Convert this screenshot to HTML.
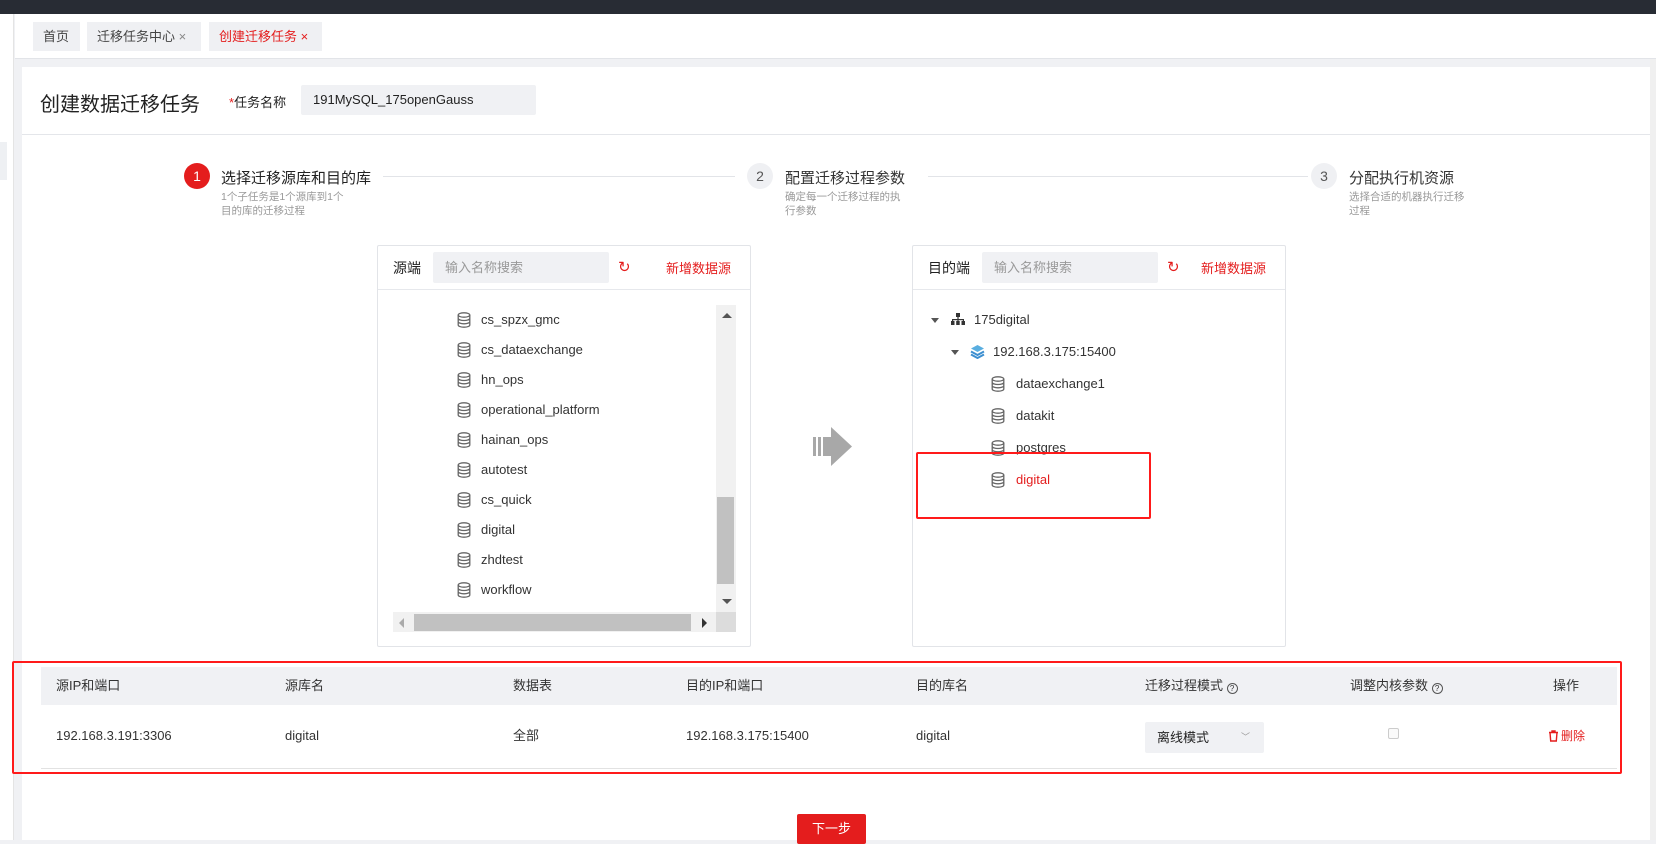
<!DOCTYPE html>
<html><head><meta charset="utf-8"><style>
*{margin:0;padding:0;box-sizing:border-box}
body{width:1656px;height:840px;overflow:hidden;background:#f0f1f4;font-family:"Liberation Sans","Noto Sans CJK SC",sans-serif;color:#222;position:relative;font-size:13px}
.a{position:absolute}
.red{color:#e41d1d}
.tab{position:absolute;top:22px;height:29px;background:#eff0f3;font-size:13px;line-height:29px;padding:0 10px;color:#444}
.db{position:absolute;width:14px;height:16px}
.item{position:absolute;font-size:13px;color:#333;white-space:nowrap}
.step{position:absolute;width:26px;height:26px;border-radius:50%;text-align:center;line-height:26px;font-size:14px}
.desc{position:absolute;font-size:10.5px;color:#999;line-height:14px}
.th{position:absolute;top:678px;font-size:13px;color:#333;line-height:16px}
.td{position:absolute;top:728px;font-size:13px;color:#333;line-height:16px}
</style></head><body>
<svg width="0" height="0" style="position:absolute"><defs>
<symbol id="db" viewBox="0 0 14 16"><g fill="none" stroke="#666" stroke-width="1.3"><ellipse cx="7" cy="3" rx="5.8" ry="2.2"/><path d="M1.2 3v10c0 1.2 2.6 2.2 5.8 2.2s5.8-1 5.8-2.2V3M1.2 6.3c0 1.2 2.6 2.2 5.8 2.2s5.8-1 5.8-2.2M1.2 9.6c0 1.2 2.6 2.2 5.8 2.2s5.8-1 5.8-2.2"/></g></symbol>
</defs></svg>
<div class="a" style="left:0;top:0;width:1656px;height:14px;background:#282c34"></div>
<div class="a" style="left:0;top:14px;width:14px;height:826px;background:#fff;border-right:1px solid #e4e4e4"></div>
<div class="a" style="left:0;top:142px;width:7px;height:38px;background:#eef0f3"></div>
<div class="a" style="left:15px;top:14px;width:1641px;height:45px;background:#fff;border-bottom:1px solid #e2e4e8"></div>
<div class="tab" style="left:33px;width:47px">首页</div>
<div class="tab" style="left:87px;width:114px">迁移任务中心 <span style="color:#888">×</span></div>
<div class="tab" style="left:209px;width:113px;color:#e41d1d">创建迁移任务 <span>×</span></div>
<div class="a" style="left:22px;top:67px;width:1628px;height:773px;background:#fff"></div>
<div class="a" style="left:1650px;top:59px;width:6px;height:781px;background:#f0f0f0"></div>
<div class="a" style="left:40px;top:88px;font-size:20px;color:#222">创建数据迁移任务</div>
<div class="a" style="left:229px;top:92px;font-size:13px"><span class="red">*</span>任务名称</div>
<div class="a" style="left:301px;top:85px;width:235px;height:30px;background:#f0f1f4;border-radius:2px;font-size:13px;line-height:30px;padding-left:12px">191MySQL_175openGauss</div>
<div class="a" style="left:22px;top:134px;width:1628px;height:1px;background:#e4e6ea"></div>

<div class="step" style="left:184px;top:163px;background:#e41d1d;color:#fff">1</div>
<div class="a" style="left:221px;top:167px;font-size:15px">选择迁移源库和目的库</div>
<div class="a" style="left:383px;top:176px;width:352px;height:1px;background:#e2e4e8"></div>
<div class="desc" style="left:221px;top:190px">1个子任务是1个源库到1个<br>目的库的迁移过程</div>
<div class="step" style="left:747px;top:163px;background:#eff0f3;color:#555">2</div>
<div class="a" style="left:785px;top:167px;font-size:15px;color:#333">配置迁移过程参数</div>
<div class="a" style="left:928px;top:176px;width:380px;height:1px;background:#e2e4e8"></div>
<div class="desc" style="left:785px;top:190px">确定每一个迁移过程的执<br>行参数</div>
<div class="step" style="left:1311px;top:163px;background:#eff0f3;color:#555">3</div>
<div class="a" style="left:1349px;top:167px;font-size:15px;color:#333">分配执行机资源</div>
<div class="desc" style="left:1349px;top:190px">选择合适的机器执行迁移<br>过程</div>

<!-- source panel -->
<div class="a" style="left:377px;top:245px;width:374px;height:402px;border:1px solid #e2e4e8;border-radius:2px"></div>
<div class="a" style="left:378px;top:289px;width:372px;height:1px;background:#e6e8ec"></div>
<div class="a" style="left:393px;top:258px;font-size:14px">源端</div>
<div class="a" style="left:433px;top:252px;width:176px;height:31px;background:#f0f1f4;border-radius:2px;color:#999;line-height:31px;padding-left:12px">输入名称搜索</div>
<div class="a red" style="left:618px;top:258px;font-size:15px">↻</div>
<div class="a red" style="left:666px;top:258px;font-size:13px">新增数据源</div>
<div class="a" style="left:716px;top:305px;width:20px;height:327px;background:#f1f1f1"></div>
<div class="a" style="left:717px;top:497px;width:17px;height:87px;background:#c1c1c1"></div>
<div class="a" style="left:722px;top:313px;width:0;height:0;border-left:5px solid transparent;border-right:5px solid transparent;border-bottom:5px solid #555"></div>
<div class="a" style="left:722px;top:599px;width:0;height:0;border-left:5px solid transparent;border-right:5px solid transparent;border-top:5px solid #555"></div>
<div class="a" style="left:393px;top:612px;width:343px;height:20px;background:#f1f1f1"></div>
<div class="a" style="left:414px;top:614px;width:277px;height:17px;background:#c1c1c1"></div>
<div class="a" style="left:716px;top:612px;width:20px;height:20px;background:#dcdcdc"></div>
<div class="a" style="left:399px;top:618px;border-top:5px solid transparent;border-bottom:5px solid transparent;border-right:5px solid #aaa"></div>
<div class="a" style="left:702px;top:618px;border-top:5px solid transparent;border-bottom:5px solid transparent;border-left:5px solid #333"></div>

<svg class="db" style="left:457px;top:312px"><use href="#db"/></svg><div class="item" style="left:481px;top:312px">cs_spzx_gmc</div>
<svg class="db" style="left:457px;top:342px"><use href="#db"/></svg><div class="item" style="left:481px;top:342px">cs_dataexchange</div>
<svg class="db" style="left:457px;top:372px"><use href="#db"/></svg><div class="item" style="left:481px;top:372px">hn_ops</div>
<svg class="db" style="left:457px;top:402px"><use href="#db"/></svg><div class="item" style="left:481px;top:402px">operational_platform</div>
<svg class="db" style="left:457px;top:432px"><use href="#db"/></svg><div class="item" style="left:481px;top:432px">hainan_ops</div>
<svg class="db" style="left:457px;top:462px"><use href="#db"/></svg><div class="item" style="left:481px;top:462px">autotest</div>
<svg class="db" style="left:457px;top:492px"><use href="#db"/></svg><div class="item" style="left:481px;top:492px">cs_quick</div>
<svg class="db" style="left:457px;top:522px"><use href="#db"/></svg><div class="item" style="left:481px;top:522px">digital</div>
<svg class="db" style="left:457px;top:552px"><use href="#db"/></svg><div class="item" style="left:481px;top:552px">zhdtest</div>
<svg class="db" style="left:457px;top:582px"><use href="#db"/></svg><div class="item" style="left:481px;top:582px">workflow</div>

<svg class="a" style="left:813px;top:427px" width="40" height="39"><g fill="#a8a8a8"><rect x="0" y="10" width="3" height="19"/><rect x="5" y="10" width="3" height="19"/><rect x="10" y="10" width="9" height="19"/><path d="M18 0L39 19.5 18 39z"/></g></svg>

<!-- dest panel -->
<div class="a" style="left:912px;top:245px;width:374px;height:402px;border:1px solid #e2e4e8;border-radius:2px"></div>
<div class="a" style="left:913px;top:289px;width:372px;height:1px;background:#e6e8ec"></div>
<div class="a" style="left:928px;top:258px;font-size:14px">目的端</div>
<div class="a" style="left:982px;top:252px;width:176px;height:31px;background:#f0f1f4;border-radius:2px;color:#999;line-height:31px;padding-left:12px">输入名称搜索</div>
<div class="a red" style="left:1167px;top:258px;font-size:15px">↻</div>
<div class="a red" style="left:1201px;top:258px;font-size:13px">新增数据源</div>
<div class="a" style="left:931px;top:318px;border-left:4px solid transparent;border-right:4px solid transparent;border-top:5px solid #555"></div>
<svg class="a" style="left:951px;top:313px" width="14" height="12"><g fill="#333"><rect x="5" y="0" width="4" height="4"/><rect x="6.4" y="4" width="1.2" height="3"/><rect x="1" y="6" width="12" height="1.2"/><rect x="1" y="6" width="1.2" height="2"/><rect x="11.8" y="6" width="1.2" height="2"/><rect x="6.4" y="6" width="1.2" height="2"/><rect x="0" y="8" width="3.5" height="4"/><rect x="5.2" y="8" width="3.5" height="4"/><rect x="10.5" y="8" width="3.5" height="4"/></g></svg>
<div class="item" style="left:974px;top:312px">175digital</div>
<div class="a" style="left:951px;top:350px;border-left:4px solid transparent;border-right:4px solid transparent;border-top:5px solid #555"></div>
<svg class="a" style="left:970px;top:344px" width="15" height="15"><path d="M7.5 1L14 4.5 7.5 8 1 4.5z" fill="#59aee0"/><path d="M1 7.5L7.5 11 14 7.5" stroke="#3d8fd0" stroke-width="2" fill="none"/><path d="M1 10.5L7.5 14 14 10.5" stroke="#3d8fd0" stroke-width="2" fill="none"/></svg>
<div class="item" style="left:993px;top:344px">192.168.3.175:15400</div>
<svg class="db" style="left:991px;top:376px"><use href="#db"/></svg><div class="item" style="left:1016px;top:376px">dataexchange1</div>
<svg class="db" style="left:991px;top:408px"><use href="#db"/></svg><div class="item" style="left:1016px;top:408px">datakit</div>
<svg class="db" style="left:991px;top:440px"><use href="#db"/></svg><div class="item" style="left:1016px;top:440px">postgres</div>
<svg class="db" style="left:991px;top:472px"><use href="#db"/></svg><div class="item" style="left:1016px;top:472px;color:#e41d1d">digital</div>
<div class="a" style="left:916px;top:452px;width:235px;height:67px;border:2px solid #ff1a1a;border-radius:2px"></div>

<!-- table -->
<div class="a" style="left:41px;top:667px;width:1576px;height:38px;background:#f0f1f4"></div>
<div class="a" style="left:41px;top:768px;width:1576px;height:1px;background:#e2e2e2"></div>
<div class="th" style="left:56px">源IP和端口</div>
<div class="th" style="left:285px">源库名</div>
<div class="th" style="left:513px">数据表</div>
<div class="th" style="left:686px">目的IP和端口</div>
<div class="th" style="left:916px">目的库名</div>
<div class="th" style="left:1145px">迁移过程模式 <span style="display:inline-block;width:11px;height:11px;border:1.3px solid #555;border-radius:50%;font-size:8px;line-height:9px;text-align:center;vertical-align:-1px">?</span></div>
<div class="th" style="left:1350px">调整内核参数 <span style="display:inline-block;width:11px;height:11px;border:1.3px solid #555;border-radius:50%;font-size:8px;line-height:9px;text-align:center;vertical-align:-1px">?</span></div>
<div class="th" style="left:1553px">操作</div>
<div class="td" style="left:56px">192.168.3.191:3306</div>
<div class="td" style="left:285px">digital</div>
<div class="td" style="left:513px">全部</div>
<div class="td" style="left:686px">192.168.3.175:15400</div>
<div class="td" style="left:916px">digital</div>
<div class="a" style="left:1145px;top:722px;width:119px;height:31px;background:#f0f1f4;border-radius:2px;font-size:13px;line-height:31px;padding-left:12px">离线模式<span style="position:absolute;right:14px;top:0;color:#999;font-size:9px">﹀</span></div>
<div class="a" style="left:1388px;top:728px;width:11px;height:11px;border:1px solid #ccc;border-radius:2px;background:#fafafa"></div>
<svg class="a" style="left:1548px;top:730px" width="11" height="12"><g fill="none" stroke="#e41d1d" stroke-width="1.4"><path d="M1 2.5h9M4 2.5V1h3v1.5M2 2.5l.7 8.5h5.6L9 2.5"/></g></svg>
<div class="td" style="left:1561px;font-size:12px;color:#e41d1d">删除</div>
<div class="a" style="left:12px;top:661px;width:1610px;height:113px;border:2px solid #ff1a1a;border-radius:2px"></div>

<div class="a" style="left:797px;top:814px;width:69px;height:30px;background:#e41d1d;color:#fff;font-size:13px;text-align:center;line-height:30px;border-radius:2px">下一步</div>
</body></html>
